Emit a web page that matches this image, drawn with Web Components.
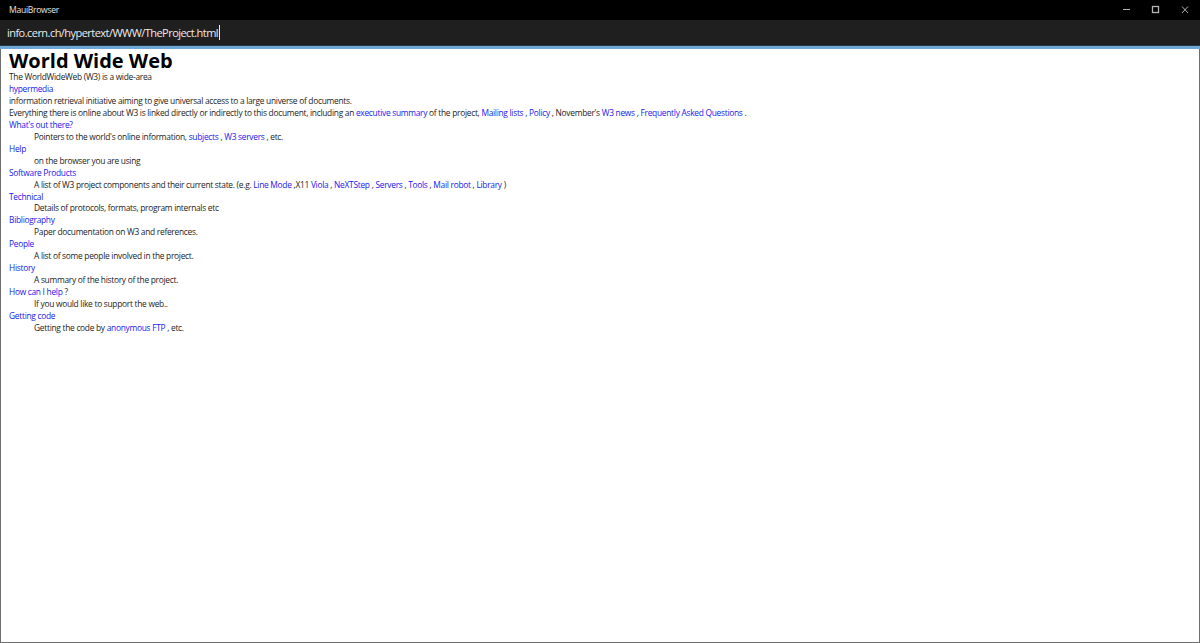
<!DOCTYPE html>
<html>
<head>
<meta charset="utf-8">
<title>MauiBrowser</title>
<style>
  html, body { margin: 0; height: 100%; background: #fff; }
</style>
</head>
<body>
<browser-window>
  <title-bar slot="title">MauiBrowser</title-bar>
  <address-bar slot="address" value="info.cern.ch/hypertext/WWW/TheProject.html"></address-bar>
  <web-view>
    <h1 slot="heading">World Wide Web</h1>
    <div>The WorldWideWeb (W3) is a wide-area</div>
    <div><w3-link>hypermedia</w3-link></div>
    <div>information retrieval initiative aiming to give universal access to a large universe of documents.</div>
    <div>Everything there is online about W3 is linked directly or indirectly to this document, including an <w3-link>executive summary</w3-link> of the project, <w3-link>Mailing lists</w3-link> , <w3-link>Policy</w3-link> , November's <w3-link>W3 news</w3-link> , <w3-link>Frequently Asked Questions</w3-link> .</div>
    <def-item><w3-link slot="term">What's out there?</w3-link>Pointers to the world's online information, <w3-link>subjects</w3-link> , <w3-link>W3 servers</w3-link> , etc.</def-item>
    <def-item><w3-link slot="term">Help</w3-link>on the browser you are using</def-item>
    <def-item><w3-link slot="term">Software Products</w3-link>A list of W3 project components and their current state. (e.g. <w3-link>Line Mode</w3-link> ,X11 <w3-link>Viola</w3-link> , <w3-link>NeXTStep</w3-link> , <w3-link>Servers</w3-link> , <w3-link>Tools</w3-link> , <w3-link>Mail robot</w3-link> , <w3-link>Library</w3-link> )</def-item>
    <def-item><w3-link slot="term">Technical</w3-link>Details of protocols, formats, program internals etc</def-item>
    <def-item><w3-link slot="term">Bibliography</w3-link>Paper documentation on W3 and references.</def-item>
    <def-item><w3-link slot="term">People</w3-link>A list of some people involved in the project.</def-item>
    <def-item><w3-link slot="term">History</w3-link>A summary of the history of the project.</def-item>
    <def-item><span slot="term"><w3-link>How can I help</w3-link> ?</span>If you would like to support the web..</def-item>
    <def-item><w3-link slot="term">Getting code</w3-link>Getting the code by <w3-link>anonymous FTP</w3-link> , etc.</def-item>
  </web-view>
</browser-window>

<script>
class BrowserWindow extends HTMLElement {
  constructor() {
    super();
    this.attachShadow({ mode: 'open' }).innerHTML = `
      <style>
        :host {
          display: flex;
          flex-direction: column;
          box-sizing: border-box;
          height: 643px;
          border: solid #6e6e6e;
          border-width: 0 1px 1px 1px;
          background: #fff;
          font-family: "Open Sans", "Noto Sans", sans-serif;
        }
      </style>
      <slot name="title"></slot>
      <slot name="address"></slot>
      <slot></slot>
    `;
  }
}

class TitleBar extends HTMLElement {
  constructor() {
    super();
    this.attachShadow({ mode: 'open' }).innerHTML = `
      <style>
        :host {
          display: flex;
          align-items: center;
          flex: none;
          height: 20px;
          margin: 0 -1px;
          padding-left: 9px;
          background: #000;
          color: #e6e6e6;
          font-size: 8.6px;
          letter-spacing: -0.3px;
        }
        .label { flex: 1; }
        .buttons { display: flex; }
        svg { display: block; width: 29px; height: 20px; }
        path, rect { fill: none; stroke: #b4b4b4; stroke-width: 1; }
      </style>
      <div class="label"><slot></slot></div>
      <div class="buttons">
        <svg viewBox="0 0 29 20"><path d="M10 9.5h7"/></svg>
        <svg viewBox="0 0 29 20"><rect x="10.5" y="6.5" width="6" height="6" style="stroke-width:1.3"/></svg>
        <svg viewBox="0 0 29 20"><path d="M11 6.5l6 6.5M17 6.5l-6 6.5"/></svg>
      </div>
    `;
  }
}

class AddressBar extends HTMLElement {
  constructor() {
    super();
    this.attachShadow({ mode: 'open' }).innerHTML = `
      <style>
        :host {
          display: flex;
          align-items: center;
          flex: none;
          box-sizing: border-box;
          height: 29px;
          margin: 0 -1px;
          padding: 0 8px 1px 7px;
          background: #1f1f1f;
          border-bottom: 3px solid #6ea6d6;
          box-shadow: inset 0 -1px 0 #24384a;
          color: #ececec;
          font-size: 11px;
          letter-spacing: -0.54px;
        }
        .caret { width: 1px; height: 15px; margin-left: 1px; background: #e8e8e8; }
      </style>
      <span class="text"></span><span class="caret"></span>
    `;
    this.shadowRoot.querySelector('.text').textContent = this.getAttribute('value');
  }
}

class WebView extends HTMLElement {
  constructor() {
    super();
    this.attachShadow({ mode: 'open' }).innerHTML = `
      <style>
        :host {
          display: block;
          flex: 1;
          padding: 2px 8px 0;
          background: #fff;
          color: #1c1c1c;
          font-size: 8.4px;
          letter-spacing: -0.28px;
          line-height: 11.95px;
        }
        ::slotted(h1) {
          margin: 0;
          color: #000;
          font-size: 20px;
          letter-spacing: 0;
          line-height: 20px;
          font-weight: 700;
        }
      </style>
      <slot name="heading"></slot>
      <slot></slot>
    `;
  }
}

class DefItem extends HTMLElement {
  constructor() {
    super();
    this.attachShadow({ mode: 'open' }).innerHTML = `
      <style>
        :host { display: block; }
        .desc { padding-left: 25px; }
      </style>
      <div><slot name="term"></slot></div>
      <div class="desc"><slot></slot></div>
    `;
  }
}

class W3Link extends HTMLElement {
  constructor() {
    super();
    this.attachShadow({ mode: 'open' }).innerHTML = `
      <style>
        :host { display: inline; color: #2020f0; cursor: pointer; }
      </style>
      <slot></slot>
    `;
  }
}

customElements.define('browser-window', BrowserWindow);
customElements.define('title-bar', TitleBar);
customElements.define('address-bar', AddressBar);
customElements.define('web-view', WebView);
customElements.define('def-item', DefItem);
customElements.define('w3-link', W3Link);
</script>
</body>
</html>
